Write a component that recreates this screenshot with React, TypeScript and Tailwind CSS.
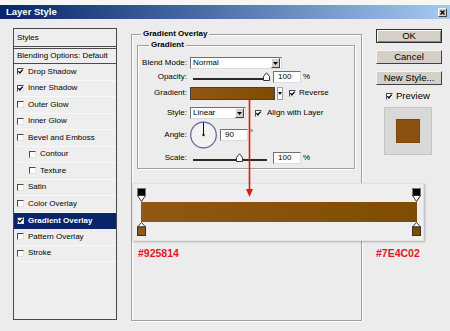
import React from "react";

const Check = ({ checked }: { checked?: boolean }) => (
  <span className="inline-flex w-[7px] h-[7px] shrink-0 items-center justify-center bg-white border-t border-l border-t-[#4a4a4a] border-l-[#4a4a4a] border-b border-r border-b-[#e4e4e4] border-r-[#e4e4e4]">
    {checked && (
      <svg width="5" height="5" viewBox="0 0 5 5">
        <path d="M0.4 2.2 L1.9 3.9 L4.7 0.6" stroke="#000" strokeWidth="1.3" fill="none" />
      </svg>
    )}
  </span>
);

const ArrowBtn = () => (
  <span className="flex w-[9px] h-[10px] mr-[1px] items-center justify-center bg-[#d4d0c8] border-t border-l border-t-white border-l-white border-b border-r border-b-[#404040] border-r-[#404040]">
    <svg width="5" height="3" viewBox="0 0 5 3">
      <path d="M0 0 H5 L2.5 3 Z" fill="#000" />
    </svg>
  </span>
);

const Field = ({ v }: { v: string }) => (
  <div className="w-[28px] h-[12px] bg-white border-t border-l border-t-[#707070] border-l-[#707070] border-b border-r border-b-[#dcdcdc] border-r-[#dcdcdc] pl-[4px] leading-[10px] text-[8px]">
    {v}
  </div>
);

const Thumb = ({ cls }: { cls: string }) => (
  <svg className={cls} width="7" height="9" viewBox="0 0 7 9">
    <path d="M0.5 8.5 V4.5 L3.5 0.8 L6.5 4.5 V8.5 Z" fill="#fff" stroke="#333" strokeWidth="1" />
  </svg>
);

const StopTop = () => (
  <svg width="9" height="15" viewBox="0 0 9 15">
    <rect x="0.5" y="1.5" width="8" height="7" fill="#000" stroke="#777" />
    <path d="M0.5 8.5 H8.5 L4.5 14.5 Z" fill="#fff" stroke="#333" />
  </svg>
);

const StopBottom = ({ color }: { color: string }) => (
  <svg width="9" height="15" viewBox="0 0 9 15">
    <path d="M4.5 0.5 L8.5 5 H0.5 Z" fill="#fff" stroke="#333" />
    <rect x="0.5" y="5" width="8" height="8.5" fill={color} stroke="#333" />
  </svg>
);

const styles: { label: string; checked?: boolean; indent?: boolean; active?: boolean }[] = [
  { label: "Drop Shadow", checked: true },
  { label: "Inner Shadow", checked: true },
  { label: "Outer Glow" },
  { label: "Inner Glow" },
  { label: "Bevel and Emboss" },
  { label: "Contour", indent: true },
  { label: "Texture", indent: true },
  { label: "Satin" },
  { label: "Color Overlay" },
  { label: "Gradient Overlay", checked: true, active: true },
  { label: "Pattern Overlay" },
  { label: "Stroke" },
];

const Btn = ({ label, def }: { label: string; def?: boolean }) => (
  <div
    className={
      def
        ? "flex h-[14px] items-center justify-center bg-[#d4d0c8] border border-[#303030] shadow-[inset_1px_1px_0_#fff,inset_-1px_-1px_0_#808080] text-[9.5px]"
        : "flex h-[14px] items-center justify-center bg-[#d4d0c8] border-t border-l border-t-[#f4f4f4] border-l-[#f4f4f4] border-b border-r border-b-[#404040] border-r-[#404040] text-[9.5px]"
    }
  >
    {label}
  </div>
);

export default function App() {
  return (
    <div className="relative w-[450px] h-[331px] overflow-hidden bg-[#ececec] font-['Liberation_Sans',Arial,sans-serif] text-black">
      <div className="h-[5px] bg-[#f6f6f6]" />
      {/* Title bar */}
      <div className="flex h-[14px] items-center justify-between pl-[6px] pr-[3px] bg-linear-to-r from-[#0a246a] to-[#a6caf0]">
        <span className="text-white font-bold text-[9.5px] leading-[14px]">Layer Style</span>
        <span className="flex w-[9px] h-[9px] items-center justify-center bg-[#d4d0c8] border-t border-l border-t-white border-l-white border-b border-r border-b-[#404040] border-r-[#404040]">
          <svg width="5" height="5" viewBox="0 0 5 5">
            <path d="M0.5 0.5 L4.5 4.5 M4.5 0.5 L0.5 4.5" stroke="#000" strokeWidth="1.4" />
          </svg>
        </span>
      </div>

      <div className="flex items-start">
        {/* Left styles list */}
        <div className="ml-[13px] mt-[9px] w-[104px] h-[292px] border border-[#4a4a4a] bg-[#eeeeee] text-[8px]">
          <div className="flex h-[17px] items-center pl-[3px]">Styles</div>
          <div className="border-b-[3px] border-double border-[#4a4a4a]" />
          <div className="flex h-[15px] items-center pl-[3px] border-b border-[#4a4a4a]">Blending Options: Default</div>
          {styles.map((s) => (
            <div
              key={s.label}
              className={
                s.active
                  ? "flex h-[16.5px] items-center gap-[4px] pl-[3px] bg-[#0a246a] text-white font-bold"
                  : s.indent
                  ? "flex h-[16.5px] items-center gap-[4px] pl-[15px] border-b border-[#f8f8f8]"
                  : "flex h-[16.5px] items-center gap-[4px] pl-[3px] border-b border-[#f8f8f8]"
              }
            >
              <Check checked={s.checked} />
              <span>{s.label}</span>
            </div>
          ))}
        </div>

        {/* Main group box */}
        <div className="relative ml-[14px] mt-[15px] w-[231px] h-[287px] border border-[#a0a0a0] shadow-[inset_1px_1px_0_#fff,1px_1px_0_#fff]">
          <span className="absolute -top-[6px] left-[9px] px-[2px] bg-[#ececec] font-bold text-[8px] leading-[10px]">
            Gradient Overlay
          </span>
          <div className="relative ml-[5px] mt-[10px] w-[218px] h-[124px] border border-[#a0a0a0] shadow-[inset_1px_1px_0_#fff,1px_1px_0_#fff] pt-[10px] text-[8px]">
            <span className="absolute -top-[6px] left-[11px] px-[2px] bg-[#ececec] font-bold text-[8px] leading-[10px]">
              Gradient
            </span>
            {/* Blend mode */}
            <div className="flex h-[14px] items-center">
              <span className="w-[49px] text-right">Blend Mode:</span>
              <div className="ml-[3px] flex w-[92px] h-[12px] items-center bg-white border-t border-l border-t-[#707070] border-l-[#707070] border-b border-r border-b-[#dcdcdc] border-r-[#dcdcdc] pl-[2px]">
                <span className="flex-1">Normal</span>
                <ArrowBtn />
              </div>
            </div>
            {/* Opacity */}
            <div className="flex h-[14px] items-center">
              <span className="w-[49px] text-right">Opacity:</span>
              <div className="relative ml-[6px] w-[74px] h-[14px]">
                <div className="absolute left-0 right-0 top-[8px] h-[2px] bg-[#2a2a2a]" />
                <Thumb cls="absolute top-[2px] left-[70px]" />
              </div>
              <div className="ml-[6px]">
                <Field v="100" />
              </div>
              <span className="ml-[2px]">%</span>
            </div>
            {/* Gradient */}
            <div className="mt-[2px] flex h-[14px] items-center">
              <span className="w-[49px] text-right">Gradient:</span>
              <div className="ml-[3px] w-[85px] h-[13px] border border-[#404040] bg-linear-to-r from-[#925814] to-[#7E4C02]" />
              <div className="ml-[2px] flex w-[6px] h-[13px] items-center justify-center bg-white border border-[#a0a0a0]">
                <svg width="4" height="3" viewBox="0 0 4 3">
                  <path d="M0 0 H4 L2 3 Z" fill="#000" />
                </svg>
              </div>
              <span className="ml-[6px] flex">
                <Check checked />
              </span>
              <span className="ml-[3px]">Reverse</span>
            </div>
            {/* Style */}
            <div className="mt-[6px] flex h-[14px] items-center">
              <span className="w-[49px] text-right">Style:</span>
              <div className="ml-[3px] flex w-[56px] h-[12px] items-center bg-white border-t border-l border-t-[#707070] border-l-[#707070] border-b border-r border-b-[#dcdcdc] border-r-[#dcdcdc] pl-[2px]">
                <span className="flex-1">Linear</span>
                <ArrowBtn />
              </div>
              <span className="ml-[9px] flex">
                <Check checked />
              </span>
              <span className="ml-[5px]">Align with Layer</span>
            </div>
            {/* Angle */}
            <div className="mt-[1px] flex h-[28px] items-center">
              <span className="w-[49px] text-right">Angle:</span>
              <div className="ml-[3px] w-[27px] h-[28px]">
                <svg width="27" height="28" viewBox="0 0 27 28">
                  <circle cx="13.5" cy="14" r="12.8" fill="#f2f2f2" stroke="#5a6898" strokeWidth="1.2" />
                  <line x1="13.5" y1="14" x2="13.5" y2="1.5" stroke="#111" strokeWidth="1" />
                  <circle cx="13.5" cy="14" r="1.2" fill="#111" />
                </svg>
              </div>
              <div className="ml-[3px]">
                <Field v="90" />
              </div>
              <span className="ml-[2px] self-start mt-[8px] text-[8px] leading-[8px]">°</span>
            </div>
            {/* Scale */}
            <div className="mt-[2px] flex h-[14px] items-center">
              <span className="w-[49px] text-right">Scale:</span>
              <div className="relative ml-[6px] w-[74px] h-[14px]">
                <div className="absolute left-0 right-0 top-[8px] h-[2px] bg-[#2a2a2a]" />
                <Thumb cls="absolute top-[2px] left-[43px]" />
              </div>
              <div className="ml-[6px]">
                <Field v="100" />
              </div>
              <span className="ml-[2px]">%</span>
            </div>
          </div>
        </div>

        {/* Right column */}
        <div className="ml-[14px] mt-[10px] flex w-[66px] flex-col">
          <Btn label="OK" def />
          <div className="mt-[7px]">
            <Btn label="Cancel" />
          </div>
          <div className="mt-[7px]">
            <Btn label="New Style..." />
          </div>
          <div className="mt-[4px] flex h-[14px] items-center pl-[10px] text-[9.5px]">
            <Check checked />
            <span className="ml-[3px]">Preview</span>
          </div>
          <div className="mt-[4px] ml-[8px] flex w-[48px] h-[48px] items-center justify-center bg-[#d8d8d8] border border-[#c4c4c4]">
            <div className="w-[24px] h-[24px] bg-[#8a520e] border border-[#7a4806]" />
          </div>
        </div>
      </div>

      {/* Annotation: gradient preview */}
      <div className="absolute left-[132px] top-[183px] w-[292px] h-[58px] bg-[#eeeeee] border border-[#e0e0e0] shadow-[1px_1px_2px_rgba(0,0,0,0.25)] pl-[4px] pt-[3px]">
        <div className="flex w-[284px] justify-between">
          <StopTop />
          <StopTop />
        </div>
        <div className="ml-[4px] w-[276px] h-[20px] bg-linear-to-r from-[#925814] to-[#7E4C02]" />
        <div className="flex w-[284px] justify-between">
          <StopBottom color="#925814" />
          <StopBottom color="#7E4C02" />
        </div>
      </div>

      {/* Annotation: red arrow */}
      <svg className="absolute left-[245px] top-[97px]" width="9" height="101" viewBox="0 0 9 101">
        <line x1="4.5" y1="0" x2="4.5" y2="93" stroke="#e01818" strokeWidth="1.6" />
        <path d="M1 92 H8 L4.5 100 Z" fill="#e01818" />
      </svg>

      {/* Annotation: color labels */}
      <span className="absolute left-[138px] top-[247px] text-[10.5px] leading-[12px] font-bold text-[#e3161c]">
        #925814
      </span>
      <span className="absolute left-[376px] top-[247px] text-[10.5px] leading-[12px] font-bold text-[#e3161c]">
        #7E4C02
      </span>
    </div>
  );
}
